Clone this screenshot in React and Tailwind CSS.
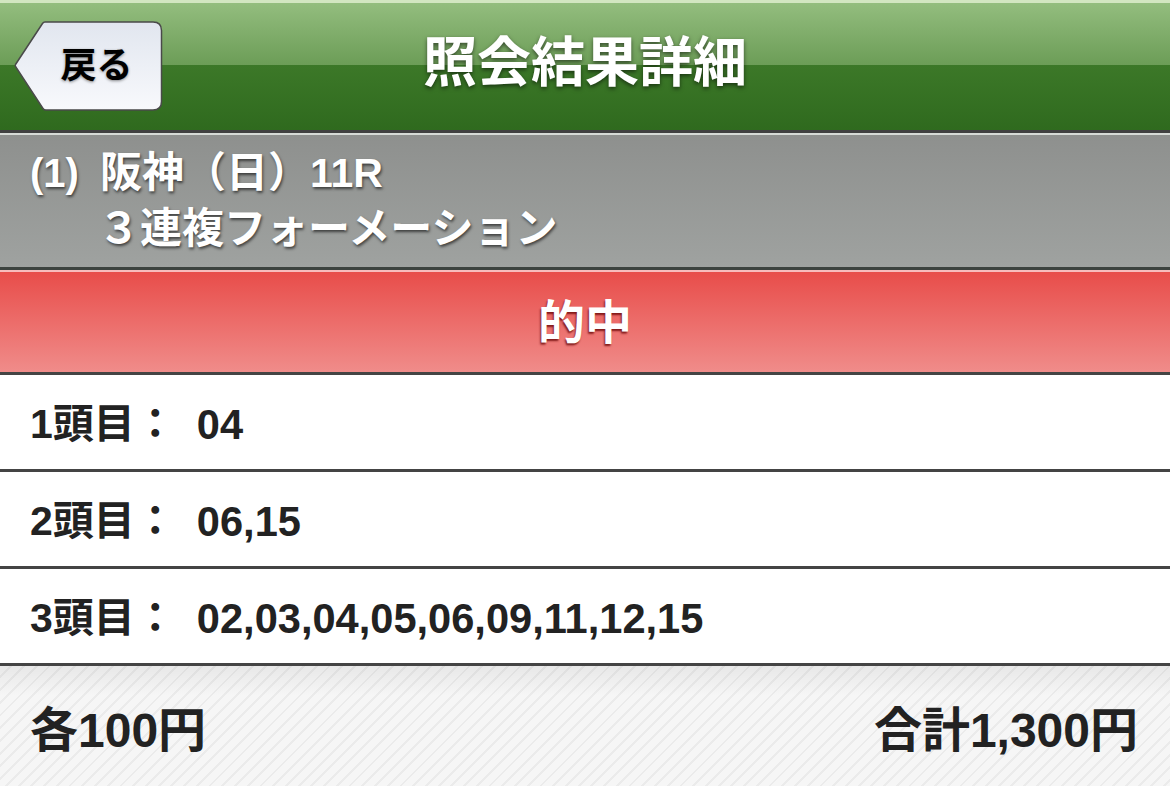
import React from "react";

function BackButton() {
  return (
    <div className="absolute left-[14px] top-[21px] w-[149px] h-[90px]">
      <svg className="absolute inset-0" width="149" height="90" viewBox="0 0 149 90">
        <defs>
          <linearGradient id="bb" x1="0" y1="0" x2="0" y2="1">
            <stop offset="0" stopColor="#e1e6ef" />
            <stop offset="1" stopColor="#f8f9fc" />
          </linearGradient>
        </defs>
        <path
          d="M31 1 H139 Q147.5 1 147.5 9.5 V80.5 Q147.5 89 139 89 H32 Q30 89 29 87.5 L1.5 45.5 Q1 44.5 1.5 43.5 L28.5 2.5 Q29.5 1 31 1 Z"
          fill="url(#bb)"
          stroke="#4a4a4a"
          strokeWidth="1.5"
        />
      </svg>
      <div className="absolute inset-0 pl-[16px] flex items-center justify-center">
        <span className="text-[36px] font-bold text-black leading-none [text-shadow:0_1px_3px_rgba(0,0,0,0.45)]">
          戻る
        </span>
      </div>
    </div>
  );
}

function Row({ label, value }) {
  return (
    <div className="h-[97px] bg-white border-b-[3px] border-[#444444] flex items-center pl-[30px] pt-[6px] text-[#222222] font-bold">
      <span className="text-[41px]">{label}</span>
      <span className="ml-[21px] text-[41.6px]">{value}</span>
    </div>
  );
}

export default function App() {
  return (
    <div className="w-[1170px] h-[786px] overflow-hidden bg-white [font-family:'Liberation_Sans','Noto_Sans_CJK_JP',sans-serif]">
      {/* header */}
      <div className="relative h-[133px] border-b-[3px] border-[#404040] bg-[linear-gradient(to_bottom,#d2e6c1_0px,#d2e6c1_3px,#93bd7e_3px,#6c9d57_65px,#3c7828_65px,#2f6a1e_130px)]">
        <BackButton />
        <div className="h-full flex items-center justify-center pb-[4px]">
          <h1 className="text-[54px] font-bold text-white leading-none [text-shadow:0_2px_4px_rgba(0,0,0,0.55)]">
            照会結果詳細
          </h1>
        </div>
      </div>

      {/* race info */}
      <div className="h-[137px] border-t-[2px] border-[#d6dad6] border-b-[3px] border-b-[#3c433f] bg-[linear-gradient(to_bottom,#8e908e,#9fa2a0)] pt-[10px] text-white font-bold [text-shadow:1px_2px_3px_rgba(0,0,0,0.6)]">
        <div className="pl-[30px] text-[40px] leading-[55px] flex items-baseline">
          <span>(1)</span>
          <span className="ml-[21px] text-[42px]">阪神（日）</span>
          <span className="text-[41px]">11R</span>
        </div>
        <div className="pl-[98px] text-[42px] leading-[55px]">３連複フォーメーション</div>
      </div>

      {/* hit */}
      <div className="h-[105px] border-t-[2px] border-[#f7bcbc] border-b-[3px] border-b-[#444444] bg-[linear-gradient(to_bottom,#e84d4a,#f08c8a)] flex items-center justify-center">
        <span className="text-[47px] font-bold text-white leading-none [text-shadow:-1px_2px_2px_rgba(110,10,10,0.85)]">
          的中
        </span>
      </div>

      <Row label="1頭目：" value="04" />
      <Row label="2頭目：" value="06,15" />
      <Row label="3頭目：" value="02,03,04,05,06,09,11,12,15" />

      {/* footer */}
      <div className="h-[120px] [background-image:linear-gradient(to_bottom,rgba(0,0,0,0.06),rgba(0,0,0,0)_25%),repeating-linear-gradient(135deg,#f6f6f6_0px,#f6f6f6_7px,#ebebeb_7px,#ebebeb_9px)] flex items-center justify-between pl-[30px] pr-[32px] pt-[10px] text-[#222222] text-[48px] font-bold">
        <span>各100円</span>
        <span>合計1,300円</span>
      </div>
    </div>
  );
}
